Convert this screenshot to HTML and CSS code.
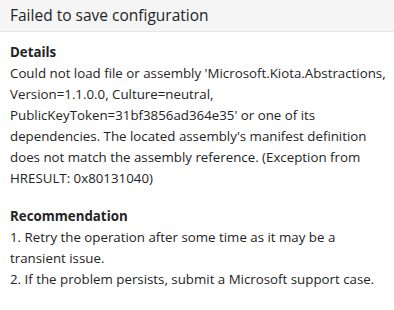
FILE: index.html
```html
<!DOCTYPE html>
<html>
<head>
<meta charset="utf-8">
<link rel="stylesheet" href="styles.css">
</head>
<body>
<div class="panel">
  <div class="header">Failed to save configuration</div>
  <div class="content">
    <section class="block">
      <div class="label">Details</div>
      <div class="text">Could not load file or assembly 'Microsoft.Kiota.Abstractions, Version=1.1.0.0, Culture=neutral, PublicKeyToken=31bf3856ad364e35' or one of its dependencies. The located assembly's manifest definition does not match the assembly reference. (Exception from HRESULT: 0x80131040)</div>
    </section>
    <section class="block">
      <div class="label">Recommendation</div>
      <div class="text">1. Retry the operation after some time as it may be a transient issue.<br>2. If the problem persists, submit a Microsoft support case.</div>
    </section>
  </div>
</div>
</body>
</html>
```
FILE: styles.css
```css
html, body {
  margin: 0;
  padding: 0;
  background: #ffffff;
}
body {
  font-family: "Open Sans", "Noto Sans", sans-serif;
  color: #242424;
}
.panel {
  width: 394px;
}
.header {
  height: 32px;
  box-sizing: border-box;
  background: #f5f5f5;
  border-bottom: 1px solid #e6e6e6;
  padding: 0 10px;
  font-size: 15.5px;
  line-height: 31px;
}
.content {
  padding: 10px 5px 0 10px;
  display: flex;
  flex-direction: column;
  gap: 17px;
}
.label {
  font-weight: 700;
  font-size: 13.3px;
  line-height: 21px;
}
.text {
  font-size: 13.3px;
  line-height: 21px;
}
```
